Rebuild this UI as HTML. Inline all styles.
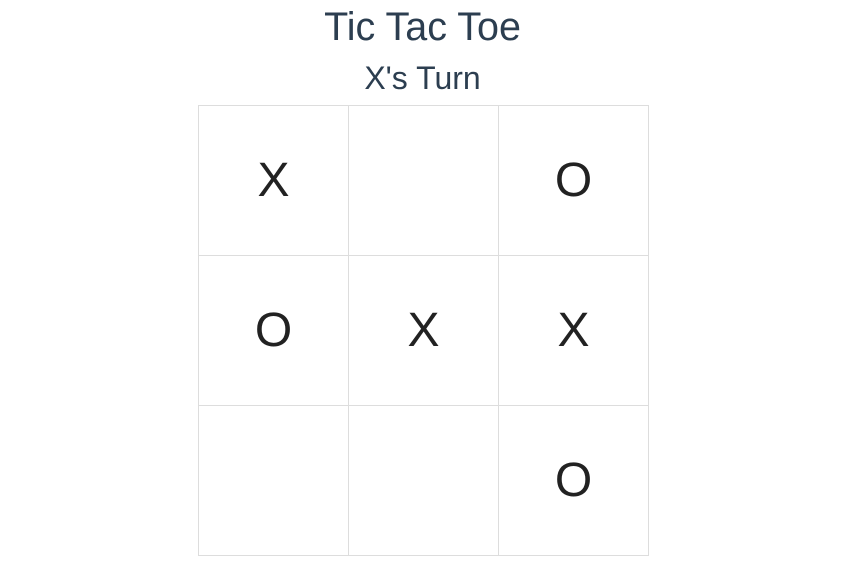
<!DOCTYPE html>
<html><head><style>
body{margin:0;background:#fff;font-family:"Liberation Sans",sans-serif;}
h1{position:absolute;left:0;width:845px;top:0;margin:0;text-align:center;font-weight:normal;font-size:39.5px;line-height:54px;color:#2c3e50;}
h2{position:absolute;left:0;width:845px;top:58px;margin:0;text-align:center;font-weight:normal;font-size:32px;line-height:40px;color:#2c3e50;}
.g{position:absolute;left:198px;top:105px;width:450px;height:450px;}
.c{position:absolute;width:149px;height:149px;border:1px solid #ddd;box-sizing:content-box;display:flex;align-items:center;justify-content:center;font-size:48px;color:#222;}
</style></head><body>
<h1>Tic Tac Toe</h1>
<h2>X's Turn</h2>
<div class="g">
<div class="c" style="left:0;top:0">X</div>
<div class="c" style="left:150px;top:0"></div>
<div class="c" style="left:300px;top:0">O</div>
<div class="c" style="left:0;top:150px">O</div>
<div class="c" style="left:150px;top:150px">X</div>
<div class="c" style="left:300px;top:150px">X</div>
<div class="c" style="left:0;top:300px"></div>
<div class="c" style="left:150px;top:300px"></div>
<div class="c" style="left:300px;top:300px">O</div>
</div>
</body></html>
